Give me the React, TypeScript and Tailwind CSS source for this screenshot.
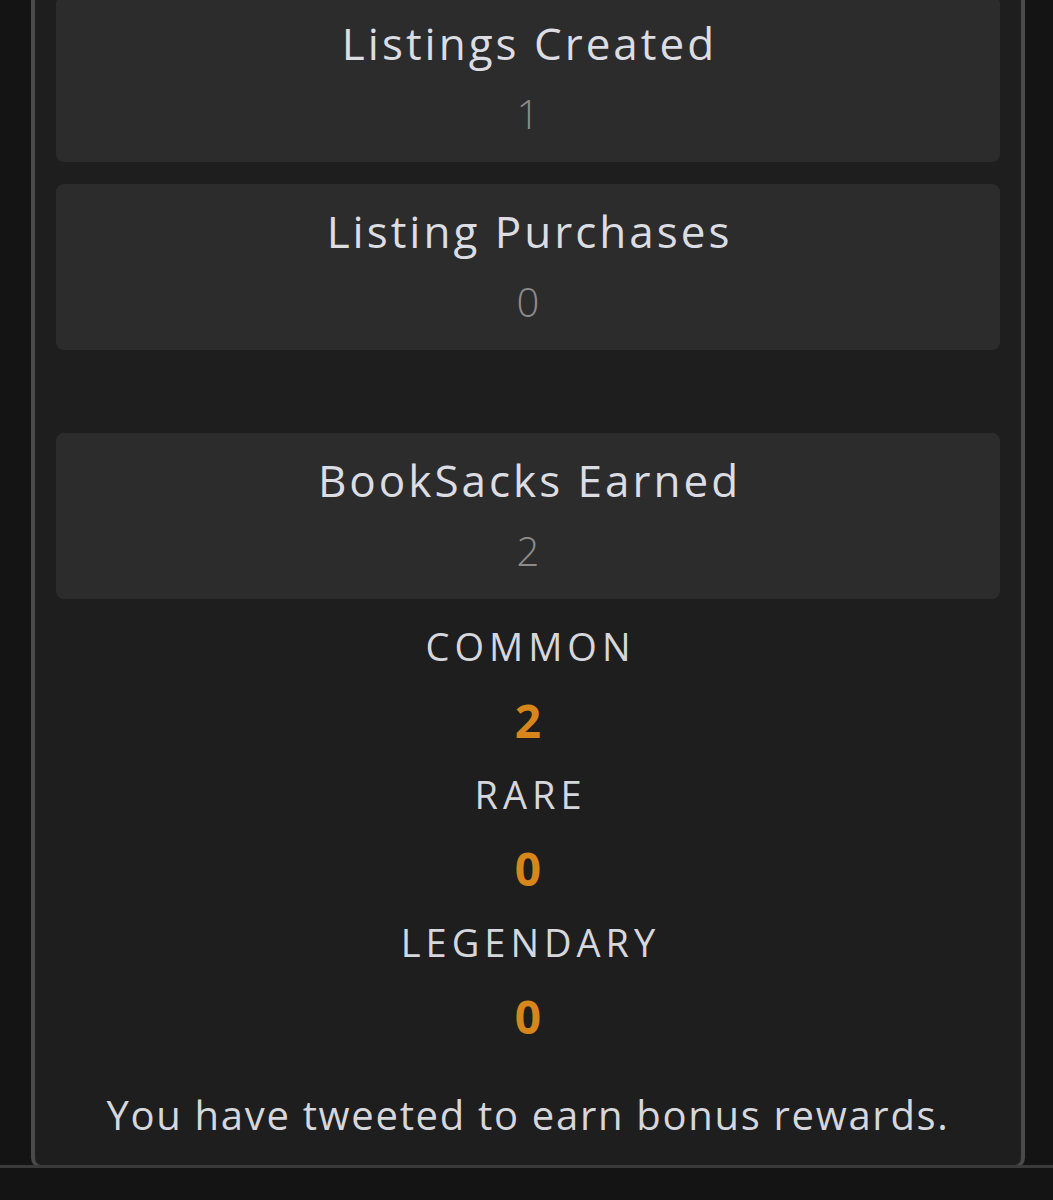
import React from "react";

const stats = [
  { label: "Listings Created", value: 1 },
  { label: "Listing Purchases", value: 0 },
];

const rarities = [
  { name: "COMMON", count: 2 },
  { name: "RARE", count: 0 },
  { name: "LEGENDARY", count: 0 },
];

function StatCard({ label, value }: { label: string; value: number }) {
  return (
    <div className="h-[166px] rounded-lg bg-[#2c2c2c] flex flex-col items-center">
      <div className="mt-[21px] text-[44px] leading-[52px] tracking-[3px] pl-[3px] text-[#dcdde2]">{label}</div>
      <div className="mt-[22px] text-[40px] leading-[46px] font-light text-[#8c8c8c]">{value}</div>
    </div>
  );
}

export default function App() {
  return (
    <main
      className="min-h-[1200px] bg-[#141414] flex flex-col"
      style={{ fontFamily: '"Open Sans", sans-serif' }}
    >
      <div className="ml-[31px] mr-[28px] border-x-[4px] border-b-[3px] border-[#4a4a4a] rounded-b-[10px] bg-[#1e1e1e] px-[21px] pb-[24px]">
        <div className="-mt-[4px] flex flex-col gap-[22px]">
          {stats.map((s) => (
            <StatCard key={s.label} {...s} />
          ))}
        </div>

        <div className="mt-[83px]">
          <StatCard label="BookSacks Earned" value={2} />
        </div>

        <div className="mt-[10px] flex flex-col items-center">
          {rarities.map((r) => (
            <React.Fragment key={r.name}>
              <div className="text-[38px] leading-[74px] tracking-[5px] pl-[5px] text-[#d6d7dc]">{r.name}</div>
              <div className="text-[46px] leading-[74px] font-bold text-[#d6861a]">{r.count}</div>
            </React.Fragment>
          ))}
        </div>

        <div className="mt-[36px] text-center text-[40px] leading-[52px] tracking-[1.7px] text-[#d6d7dc]">
          You have tweeted to earn bonus rewards.
        </div>
      </div>
      <div className="-mt-[3px] h-[3px] bg-[#3a3a3a]" />
    </main>
  );
}
